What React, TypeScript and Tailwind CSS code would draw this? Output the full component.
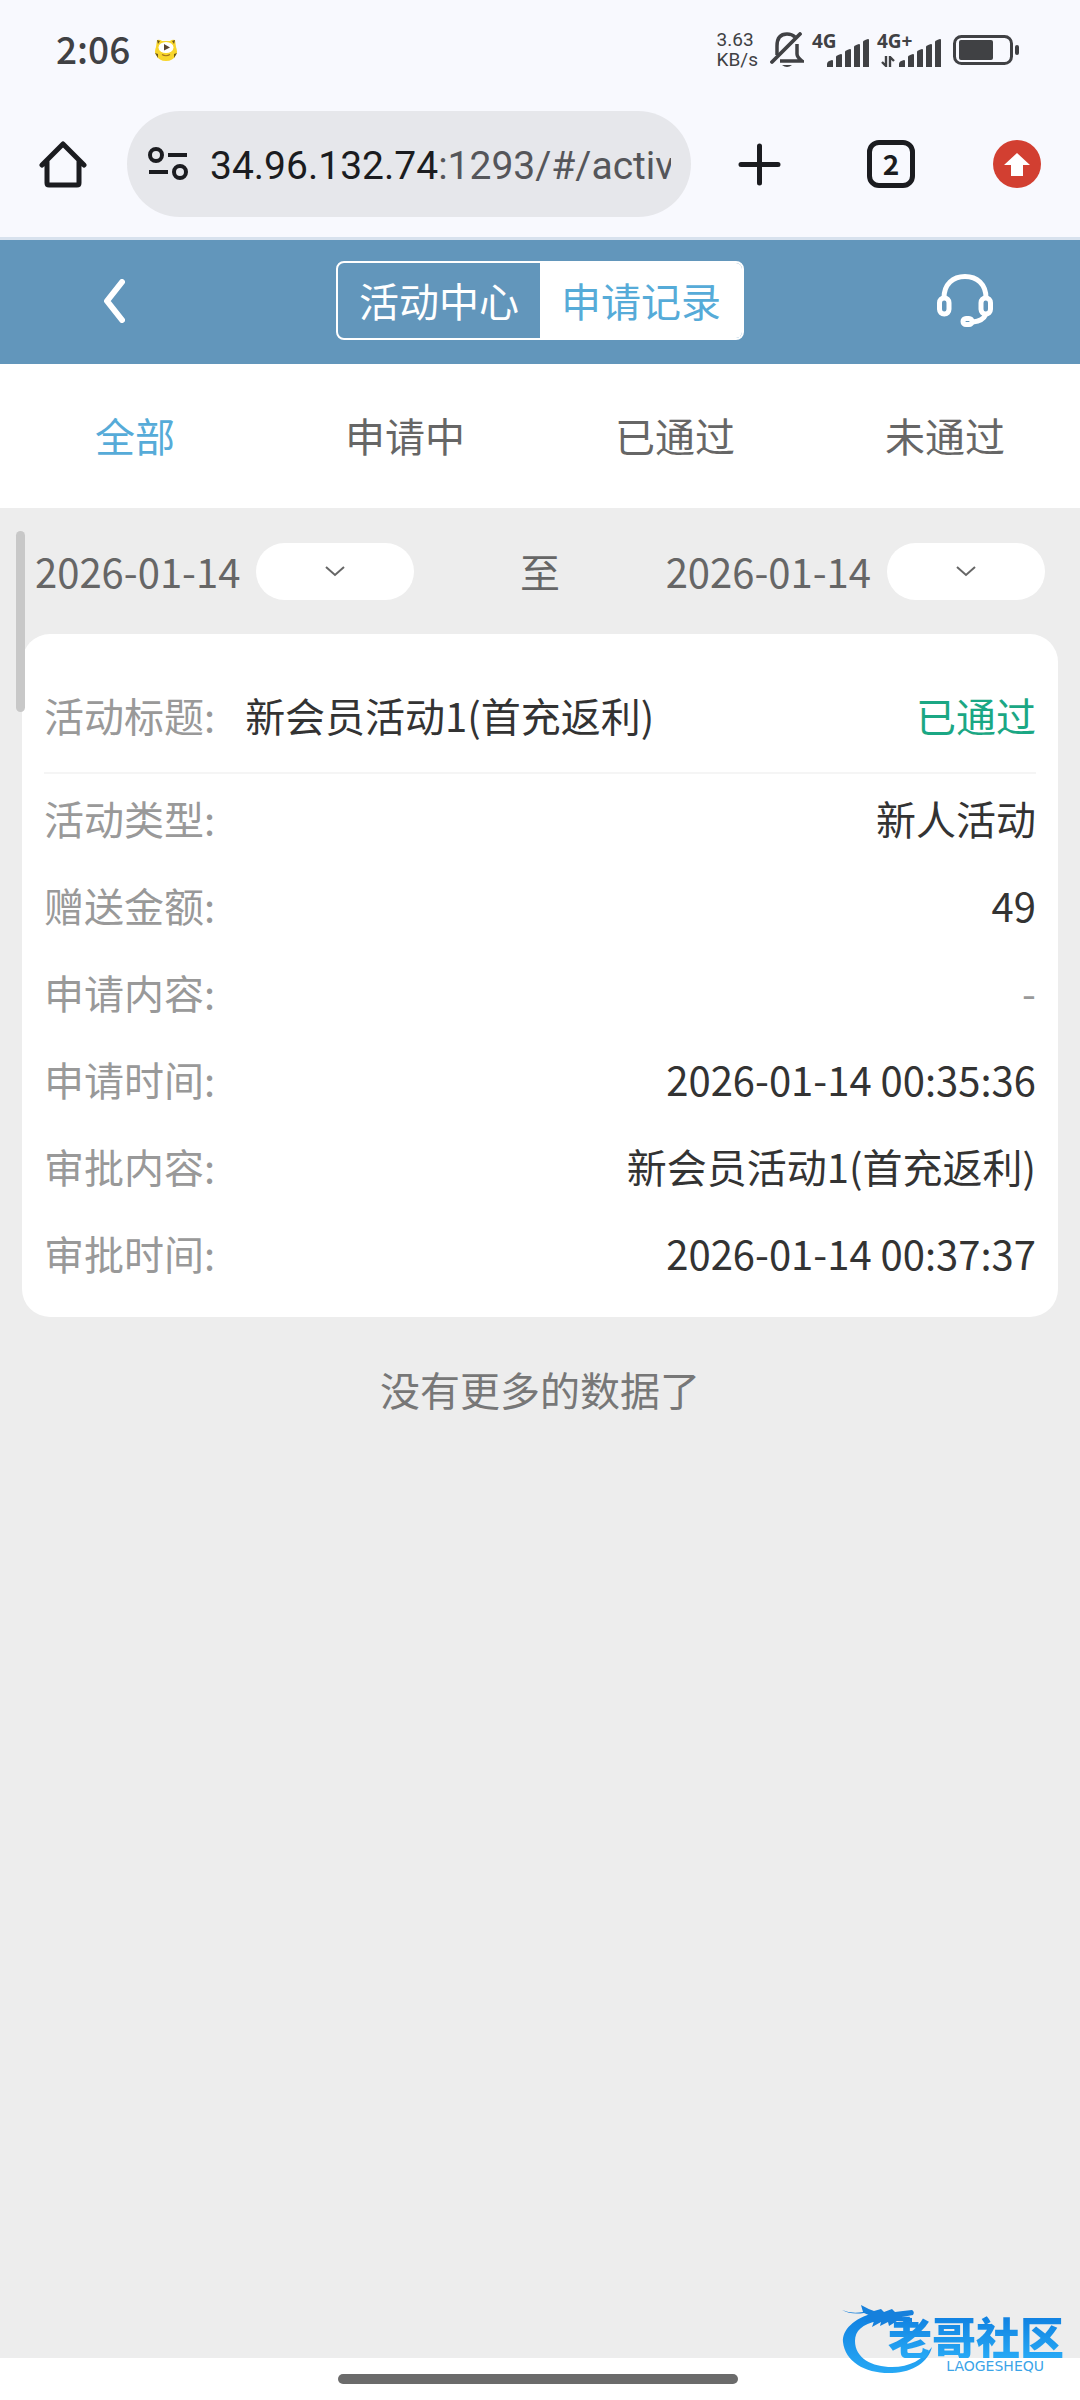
import React, { useState } from 'react';

const FILTERS = ['全部', '申请中', '已通过', '未通过'];

interface Field {
  label: string;
  value: string;
  muted?: boolean;
}

const FIELDS: Field[] = [
  { label: '活动类型:', value: '新人活动' },
  { label: '赠送金额:', value: '49' },
  { label: '申请内容:', value: '-', muted: true },
  { label: '申请时间:', value: '2026-01-14 00:35:36' },
  { label: '审批内容:', value: '新会员活动1(首充返利)' },
  { label: '审批时间:', value: '2026-01-14 00:37:37' },
];

function SignalBars() {
  return (
    <svg viewBox="0 0 42 28" className="h-7 w-[42px]" fill="currentColor" aria-hidden="true">
      <path d="M0 28v-3q0-3 5-4q1 0 1 1v6z" />
      <path d="M9 28V17.500q0-1 5-2.500q1 0 1 1v12z" />
      <path d="M18 28V12.500q0-1 5-2.500q1 0 1 1v17z" />
      <path d="M27 28V7.500q0-1 5-2.500q1 0 1 1v22z" />
      <path d="M36 28V2.500q0-1 5-2.500q1 0 1 1v27z" />
    </svg>
  );
}

function StatusBar() {
  return (
    <div className="flex h-[100px] items-center justify-between pl-14 pr-[61px] text-[#404144]">
      <div className="flex items-center gap-6">
        <span className="pb-1 font-['Noto_Sans_CJK_SC','Noto_Sans',sans-serif] text-[37px] font-medium leading-none">2:06</span>
        <svg viewBox="0 0 24 22" className="h-[22px] w-6" aria-hidden="true">
          <path d="M3 1q3-1 5 1h8q2-2 5-1l1 7q2 5 0 8q-3 6-10 6t-10-6q-2-3 0-8z" fill="#f8d62c" />
          <path d="M3 1l3 1l-2 3zM21 1l-3 1l2 3zM1 14l3 1v4zM23 14l-3 1v4z" fill="#6b571c" />
          <ellipse cx="12" cy="8.500" rx="7.500" ry="5.500" fill="#fff" />
          <path d="M10 5l6 3.500l-6 3z" fill="#5b4632" />
          <path d="M8 15.500q4 2.500 8 0" fill="none" stroke="#a2741b" strokeWidth="1.200" />
        </svg>
      </div>
      <div className="flex items-center">
        <div className="mr-3 font-['Roboto',sans-serif] text-[19px] leading-5">
          <div>3.63</div>
          <div>KB/s</div>
        </div>
        <svg viewBox="0 0 34 36" className="mr-2 h-9 w-[34px]" fill="none" stroke="currentColor" strokeWidth="3.500" aria-hidden="true">
          <path d="M7 23V14q0-12 10-12q5 0 8 3M27 12v10q0 3 5 7H10" />
          <path d="M2 30L30 2" strokeLinecap="round" strokeWidth="3.800" />
          <path d="M12 33h10q-5 4-10 0z" fill="currentColor" stroke="none" />
        </svg>
        <div className="relative mr-2 flex h-[34px] w-[57px] items-end justify-end">
          <span className="absolute left-0 top-0 font-['Noto_Sans',sans-serif] text-[19px] font-bold leading-4">4G</span>
          <SignalBars />
        </div>
        <div className="relative mr-3 flex h-[34px] w-[64px] items-end justify-end">
          <span className="absolute left-0 top-0 font-['Noto_Sans',sans-serif] text-[19px] font-bold leading-4">4G+</span>
          <svg viewBox="0 0 14 11" className="mr-1 h-[11px] w-[14px]" fill="none" stroke="currentColor" strokeWidth="2.400" aria-hidden="true">
            <path d="M5 0v10L1 6M9 11V1l4 4" />
          </svg>
          <SignalBars />
        </div>
        <svg viewBox="0 0 66 30" className="h-[30px] w-[66px]" aria-hidden="true">
          <rect x="1.500" y="1.500" width="57" height="27" rx="7" fill="none" stroke="currentColor" strokeWidth="3" />
          <rect x="6" y="5" width="34" height="20" rx="2" fill="currentColor" />
          <rect x="62" y="10" width="4" height="10" rx="2" fill="currentColor" />
        </svg>
      </div>
    </div>
  );
}

function BrowserBar() {
  return (
    <div className="flex h-[137px] items-start px-[39px] pt-[11px] text-[#1b1c20]">
      <button type="button" aria-label="Home" className="mr-10 flex h-[106px] w-12 items-center">
        <svg viewBox="0 0 48 48" className="h-12 w-12" fill="none" stroke="currentColor" strokeWidth="5" strokeLinejoin="round" strokeLinecap="round">
          <path d="M3 25L24 4l21 21M8 21v22q0 2 2 2h28q2 0 2-2V21" />
        </svg>
      </button>
      <button type="button" className="flex h-[106px] min-w-0 flex-1 items-center rounded-full bg-[#e6e7eb] pl-[21px] pr-5 text-left">
        <svg viewBox="0 0 40 34" className="mr-[22px] h-[34px] w-10 shrink-0" fill="none" stroke="currentColor" strokeWidth="4" aria-hidden="true">
          <circle cx="8" cy="8" r="6" />
          <path d="M20 8h19M1 25h19" />
          <circle cx="32" cy="25" r="6" />
        </svg>
        <span className="min-w-0 flex-1 overflow-hidden whitespace-nowrap pt-1 font-['Roboto',sans-serif] text-[39px] leading-[48px] text-[#55565a]">
          <span className="text-[#1b1c20]">34.96.132.74</span>:1293/#/activ
        </span>
      </button>
      <button type="button" aria-label="New tab" className="ml-[47px] flex h-[106px] w-[43px] items-center">
        <svg viewBox="0 0 43 43" className="h-[43px] w-[43px]" fill="none" stroke="currentColor" strokeWidth="5" strokeLinecap="round">
          <path d="M21.500 3v37M3 21.500h37" />
        </svg>
      </button>
      <div className="flex h-[106px] items-center">
        <button type="button" className="ml-[86px] flex h-12 w-12 items-center justify-center rounded-xl border-5 border-current pb-[2px] font-['Noto_Sans_CJK_SC',sans-serif] text-[28px] font-bold leading-none">
          2
        </button>
      </div>
      <button type="button" aria-label="Update" className="ml-[78px] flex h-[106px] w-12 items-center">
        <svg viewBox="0 0 48 48" className="h-12 w-12">
          <circle cx="24" cy="24" r="24" fill="#d23f31" />
          <path d="M24 13l13 12h-7v11H18V25h-7z" fill="#fff" />
        </svg>
      </button>
    </div>
  );
}

function DatePicker({ id, date }: { id: string; date: string }) {
  return (
    <div className="flex items-center gap-4 text-[#666]">
      <label htmlFor={id}>{date}</label>
      <button id={id} type="button" aria-haspopup="dialog" className="flex h-[57px] w-[158px] items-center justify-center rounded-full bg-white">
        <svg viewBox="0 0 20 12" className="h-3 w-5" fill="none" stroke="currentColor" strokeWidth="2">
          <path d="M1 2l9 8l9-8" />
        </svg>
      </button>
    </div>
  );
}

function RecordCard() {
  return (
    <div className="mx-[22px] rounded-[28px] bg-white px-[22px] pb-[21px]">
      <div className="flex h-[140px] items-center border-b-2 border-[#f5f5f5] pt-6">
        <span className="text-[#999]">活动标题:</span>
        <h2 className="ml-[30px] flex-1 text-[#333]">新会员活动1(首充返利)</h2>
        <span className="text-[#1ba784]">已通过</span>
      </div>
      <dl>
        {FIELDS.map((field) => (
          <div key={field.label} className="flex h-[87px] items-center justify-between">
            <dt className="text-[#999]">{field.label}</dt>
            <dd className={field.muted ? 'text-[#999]' : 'text-[#333]'}>{field.value}</dd>
          </div>
        ))}
      </dl>
    </div>
  );
}

function Watermark() {
  return (
    <div className="absolute bottom-[26px] right-4 h-20 w-[224px]">
      <svg viewBox="0 0 224 80" className="absolute inset-0 h-full w-full" aria-hidden="true">
        <defs>
          <linearGradient id="dragon" x1="0" y1="0" x2="0" y2="1">
            <stop offset="0" stopColor="#107fe0" />
            <stop offset="1" stopColor="#27a9f5" />
          </linearGradient>
        </defs>
        <path d="M34 19C14 24 2 36 3 48C5 68 26 80 52 79C74 78 88 68 92 53C82 66 70 73 52 73C32 73 15 64 15 47C15 37 22 30 38 27z" fill="url(#dragon)" />
        <path d="M2 16q9 4 21 2l-2-7q7 4 13 6l7-2l3 3l8-3l3 3l8-1l9-1q3 2 1 5l-11 2l10 1v4l-15-1l-8 5l-1-4l-8 4l1-4l-9 5l2-6l-10 1l7-6l-7-3q-13 2-22-3z" fill="#1680dc" />
      </svg>
      <div className="absolute right-0 top-5 flex flex-col items-end">
        <span className="bg-linear-to-b from-[#107fe0] to-[#27a9f5] bg-clip-text text-[44px] font-black leading-[44px] text-transparent">老哥社区</span>
        <span className="mr-5 font-['DejaVu_Sans',sans-serif] text-[14px] leading-4 text-[#3ba4e8]">LAOGESHEQU</span>
      </div>
    </div>
  );
}

export default function App() {
  const [filter, setFilter] = useState('全部');

  return (
    <div className="relative flex min-h-screen flex-col bg-[#ededed] font-['Noto_Sans_CJK_SC',sans-serif] text-[40px] leading-[58px]">
      <header className="border-b-3 border-[#d8e2ee] bg-[#f8f9fe]">
        <StatusBar />
        <BrowserBar />
      </header>

      <nav className="flex h-[124px] items-center justify-between bg-[#6296bb] px-[87px] pb-[3px] text-white">
        <button type="button" aria-label="返回" className="flex w-[72px] pl-4">
          <svg viewBox="0 0 22 44" className="h-11 w-[22px]" fill="none" stroke="currentColor" strokeWidth="6" strokeLinecap="round" strokeLinejoin="round">
            <path d="M19 3L4 22l15 19" />
          </svg>
        </button>
        <div className="flex h-[79px] w-[408px] overflow-hidden rounded-lg border-2 border-white">
          <button type="button" className="flex-1 pb-[2px]">活动中心</button>
          <button type="button" className="flex-1 bg-white pb-[2px] text-[#56abd8]">申请记录</button>
        </div>
        <button type="button" aria-label="客服" className="flex w-[72px] justify-end">
          <svg viewBox="0 0 56 54" className="h-[54px] w-14" fill="none" stroke="currentColor" strokeWidth="5">
            <rect x="2.500" y="24" width="9.500" height="16" rx="4.700" />
            <rect x="44" y="24" width="9.500" height="16" rx="4.700" />
            <path d="M7 24C7 10 16 2.500 28 2.500S49 10 49 24M49 40q-3 7-13 8" />
            <rect x="26" y="44.500" width="9" height="6" rx="3" />
          </svg>
        </button>
      </nav>

      <div className="flex h-36 bg-white">
        {FILTERS.map((name) => (
          <button
            key={name}
            type="button"
            onClick={() => setFilter(name)}
            className={name === filter ? 'flex-1 pb-[2px] text-[#56abd8]' : 'flex-1 pb-[2px] text-[#666]'}
          >
            {name}
          </button>
        ))}
      </div>

      <main className="relative flex-1">
        <div className="absolute left-4 top-[23px] h-[181px] w-[9px] rounded-full bg-[#c8c8c8]" />
        <div className="flex h-[126px] items-center justify-between px-[35px]">
          <DatePicker id="start-date" date="2026-01-14" />
          <span className="text-[#666]">至</span>
          <DatePicker id="end-date" date="2026-01-14" />
        </div>
        <RecordCard />
        <p className="pt-[43px] text-center text-[#777]">没有更多的数据了</p>
      </main>

      <footer className="flex h-[42px] justify-center bg-white pr-1 pt-4">
        <div className="h-[10px] w-[400px] rounded-full bg-[#6b6b6b]" />
      </footer>
      <Watermark />
    </div>
  );
}
